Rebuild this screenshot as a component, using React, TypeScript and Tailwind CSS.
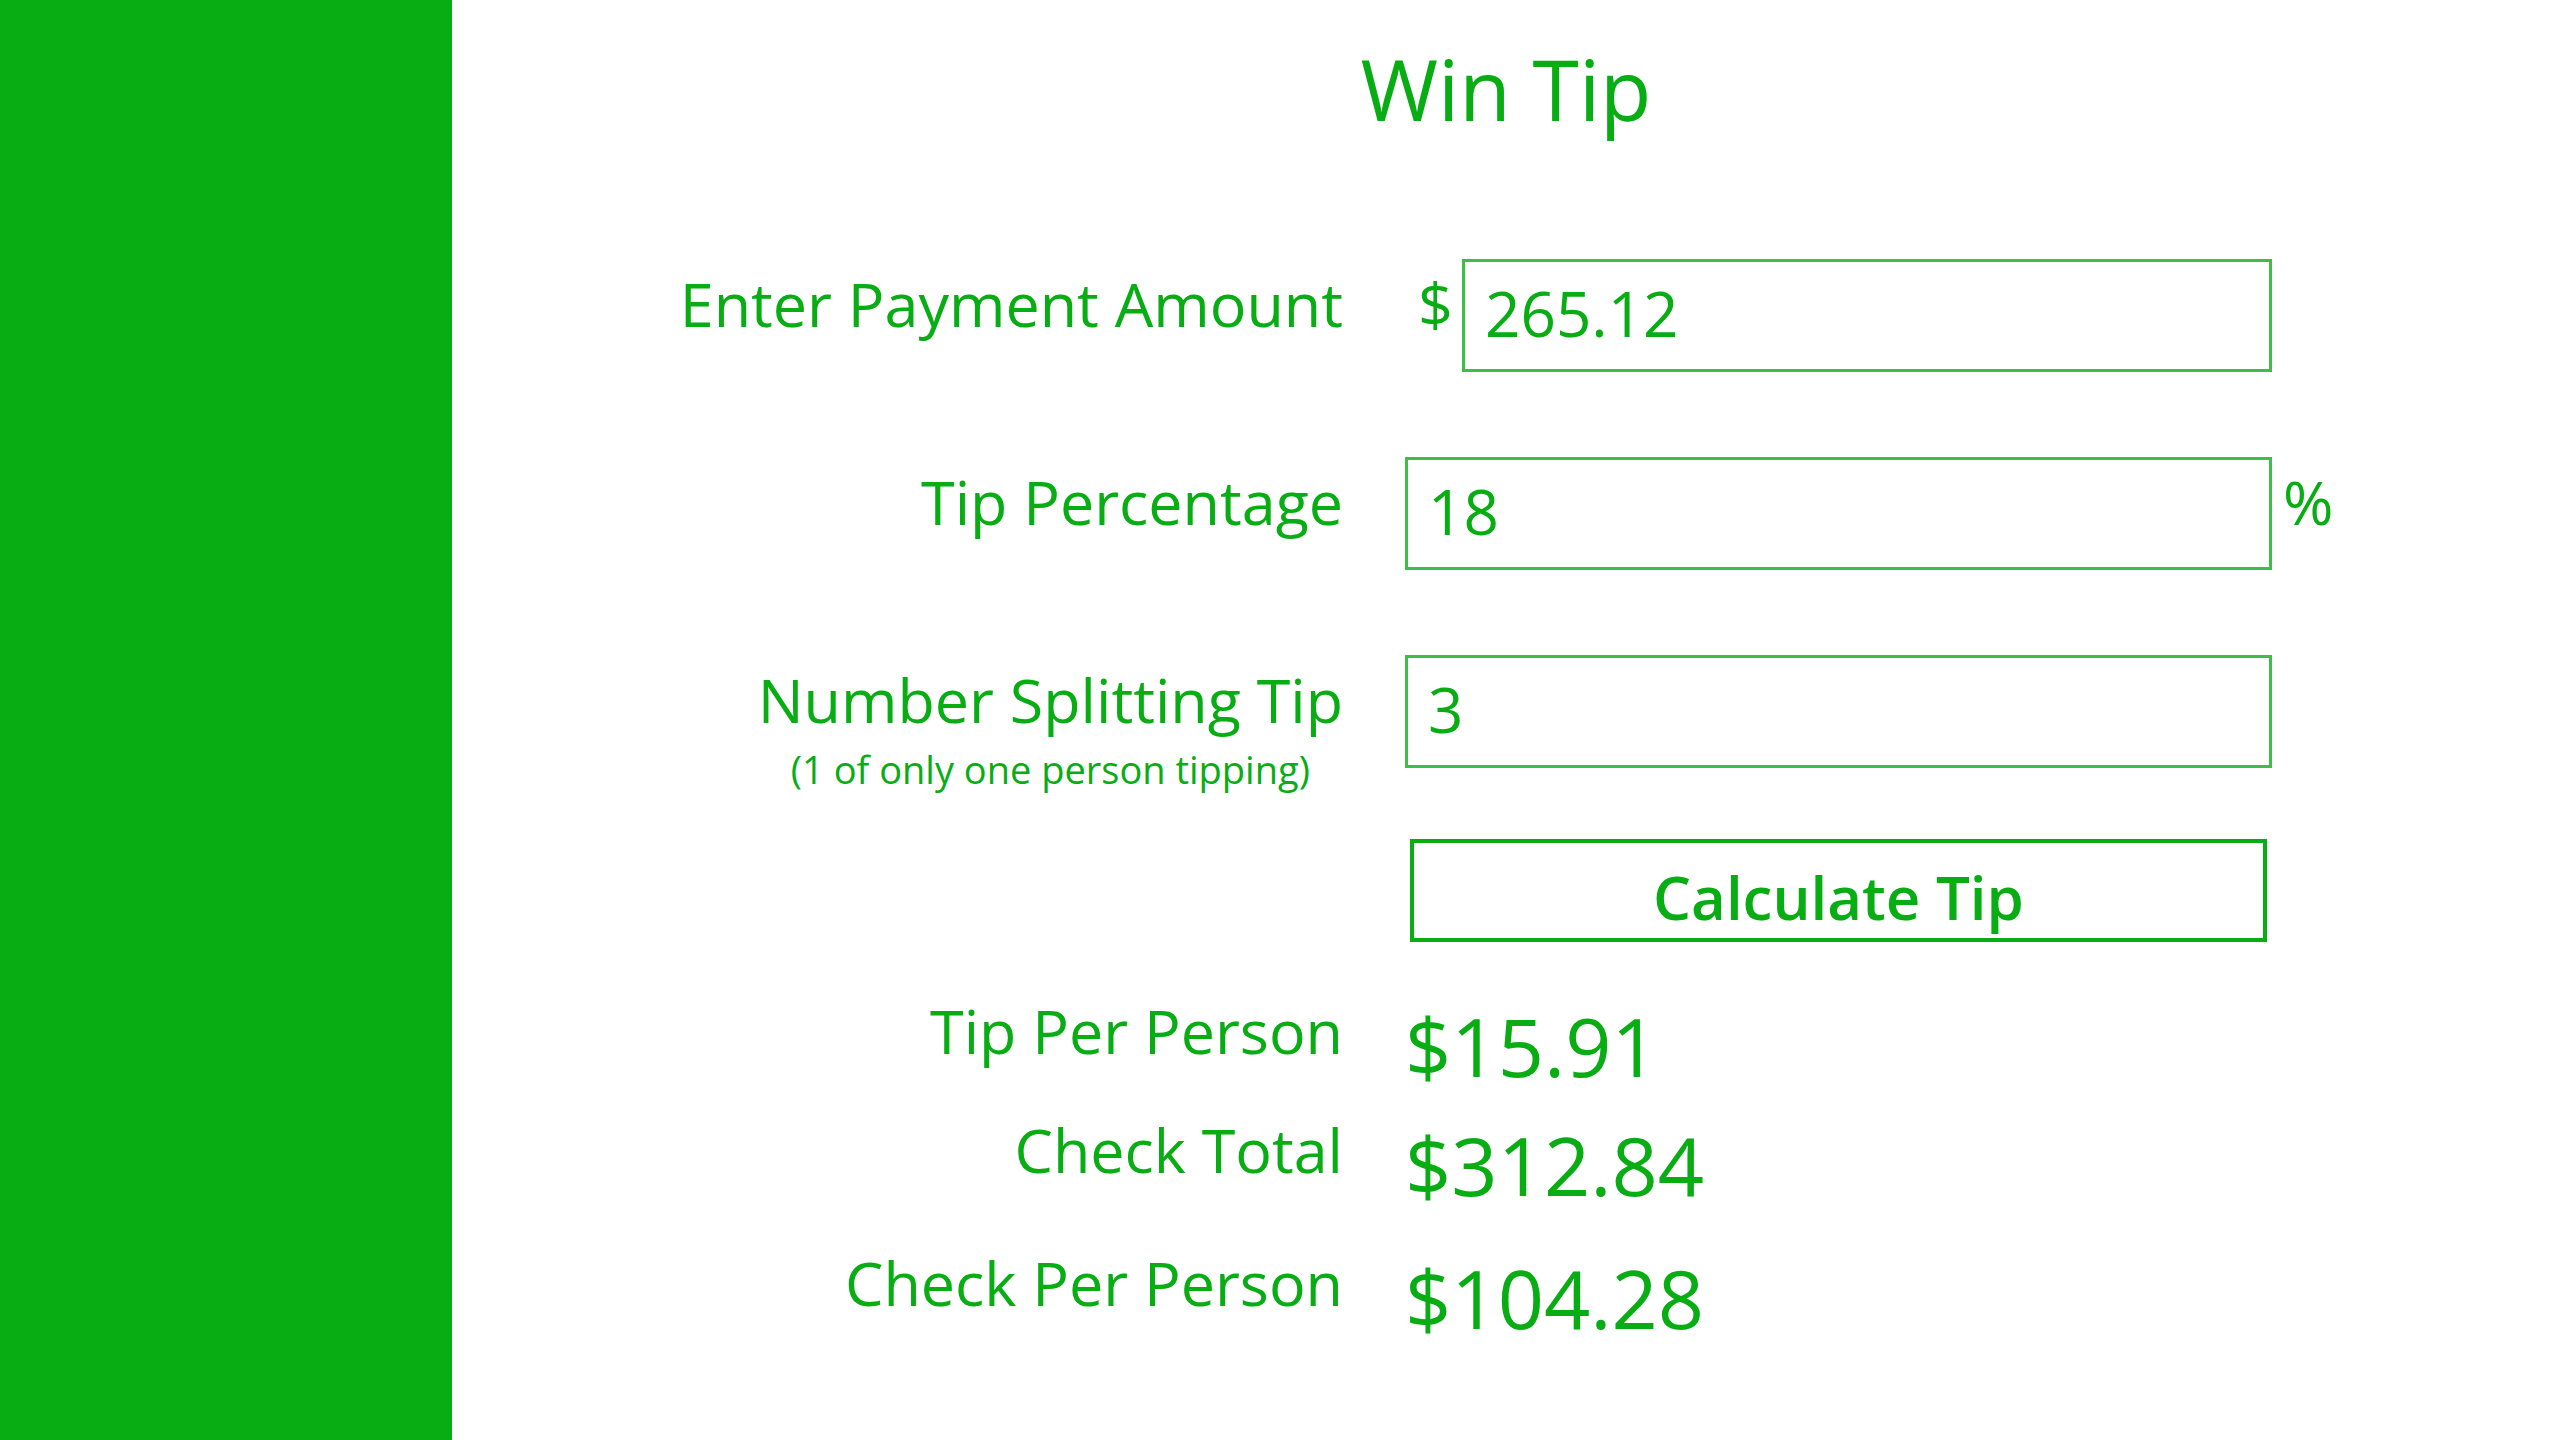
import { useState } from 'react';

const GREEN = 'text-[#07ad13]';

function Label({ children }: { children: React.ReactNode }) {
  return (
    <div className="w-[891px] shrink-0 text-right mt-[14px] text-[61px] leading-[62px]">
      {children}
    </div>
  );
}

function Field({
  value,
  onChange,
  wide = false,
}: {
  value: string;
  onChange: (v: string) => void;
  wide?: boolean;
}) {
  return (
    <input
      type="text"
      value={value}
      onChange={(e) => onChange(e.target.value)}
      className={`${wide ? 'w-[867px]' : 'w-[810px]'} h-[113px] border-[3px] border-[#3dbf46] bg-white pl-[20px] pr-[20px] pt-0 pb-[5px] text-[62px] leading-[62px] outline-none ${GREEN}`}
    />
  );
}

function Result({ label, value, className }: { label: string; value: string; className: string }) {
  return (
    <div className={`flex items-start gap-[62px] ${className}`}>
      <Label>{label}</Label>
      <div className="mt-[19px] text-[81px] leading-[82px]">${value}</div>
    </div>
  );
}

export default function App() {
  const [amount, setAmount] = useState('265.12');
  const [percent, setPercent] = useState('18');
  const [split, setSplit] = useState('3');
  const [result, setResult] = useState({ tip: '15.91', total: '312.84', each: '104.28' });

  const calculate = () => {
    const a = parseFloat(amount) || 0;
    const p = parseFloat(percent) || 0;
    const n = Math.max(1, parseInt(split) || 1);
    const tip = (a * p) / 100;
    const total = a + tip;
    setResult({
      tip: (tip / n).toFixed(2),
      total: total.toFixed(2),
      each: (total / n).toFixed(2),
    });
  };

  return (
    <div className={`flex w-full h-screen bg-white font-['Open_Sans','Noto_Sans',sans-serif] ${GREEN}`}>
      <div className="w-[452px] shrink-0 bg-[#07ad13]" />

      <div className="flex-1 flex flex-col">
        <h1 className="pt-[47px] text-center text-[84px] leading-[84px] font-normal">Win Tip</h1>

        {/* payment amount */}
        <div className="flex items-start gap-[62px] mt-[128px]">
          <Label>Enter Payment Amount</Label>
          <div className="w-[867px] flex items-start justify-between">
            <span className="pl-[13px] mt-[14px] text-[61px] leading-[62px]">$</span>
            <Field value={amount} onChange={setAmount} />
          </div>
        </div>

        {/* tip percentage */}
        <div className="flex items-start gap-[62px] mt-[85px]">
          <Label>Tip Percentage</Label>
          <div className="flex items-start">
            <Field value={percent} onChange={setPercent} wide />
            <span className="ml-[11px] mt-[14px] text-[61px] leading-[62px]">%</span>
          </div>
        </div>

        {/* number splitting */}
        <div className="flex items-start gap-[62px] mt-[85px] h-[113px]">
          <div className="w-[891px] shrink-0 text-right mt-[14px]">
            <div className="inline-flex flex-col items-center">
              <span className="text-[61px] leading-[62px]">Number Splitting Tip</span>
              <span className="mt-[20px] text-[38px] leading-[36px]">(1 of only one person tipping)</span>
            </div>
          </div>
          <Field value={split} onChange={setSplit} wide />
        </div>

        {/* button */}
        <div className="flex gap-[62px] mt-[71px]">
          <div className="w-[891px] shrink-0" />
          <button
            onClick={calculate}
            className="ml-[5px] w-[857px] h-[103px] border-4 border-[#07ad13] bg-white pt-[12px] text-[60px] leading-[60px] font-semibold cursor-pointer"
          >
            Calculate Tip
          </button>
        </div>

        {/* results */}
        <Result label="Tip Per Person" value={result.tip} className="mt-[44px]" />
        <Result label="Check Total" value={result.total} className="mt-[18px]" />
        <Result label="Check Per Person" value={result.each} className="mt-[32px]" />
      </div>
    </div>
  );
}
